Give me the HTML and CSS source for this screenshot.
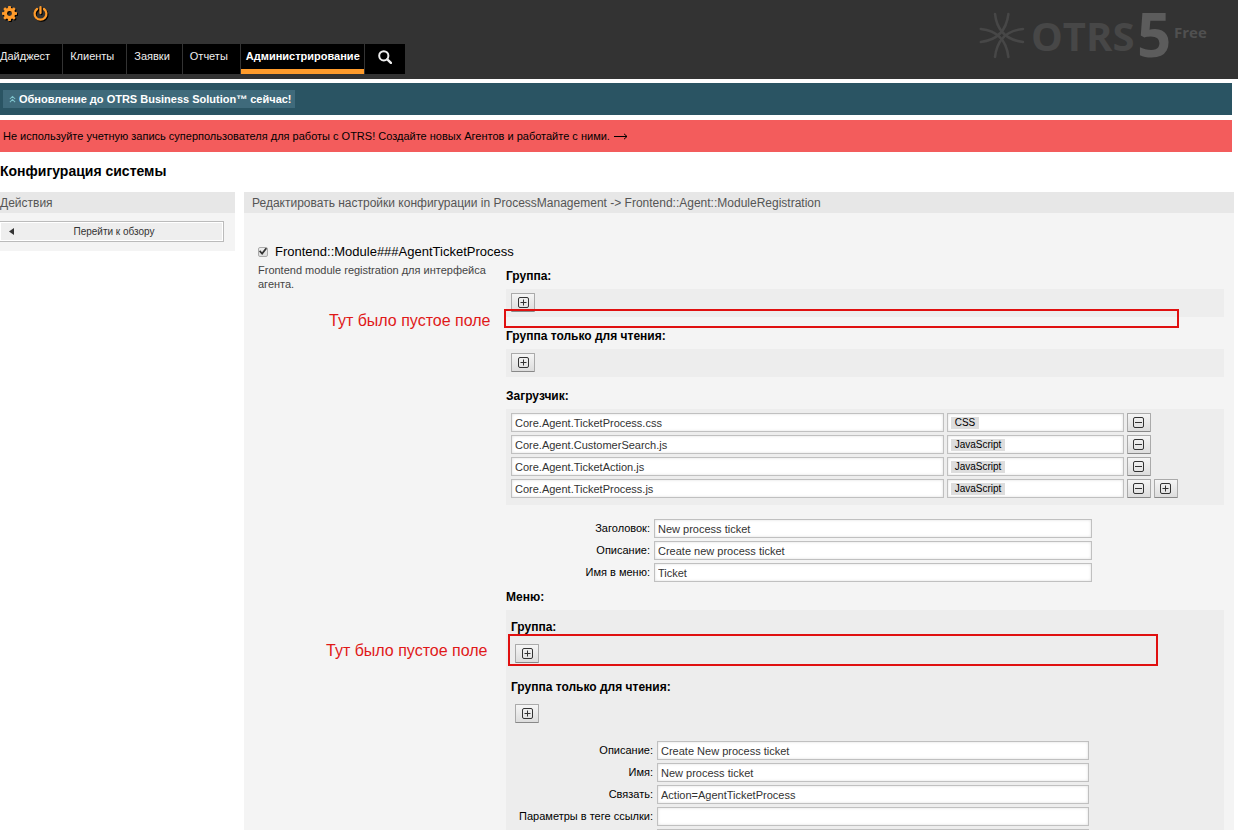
FILE: index.html
```html
<!DOCTYPE html>
<html lang="ru">
<head>
<meta charset="utf-8">
<title>Конфигурация системы - OTRS</title>
<link rel="stylesheet" href="styles.css">
</head>
<body>
<svg class="defs" aria-hidden="true">
  <symbol id="plus" viewBox="0 0 11 11"><rect x=".5" y=".5" width="10" height="10" rx="1.5" fill="none" stroke="currentColor"/><path d="M2.5 5.5h6M5.5 2.5v6" stroke="currentColor" fill="none"/></symbol>
  <symbol id="minus" viewBox="0 0 11 11"><rect x=".5" y=".5" width="10" height="10" rx="1.5" fill="none" stroke="currentColor"/><path d="M2 5.5h7" stroke="currentColor" fill="none"/></symbol>
</svg>
<header class="header">
  <div class="toolbar">
    <a href="#" aria-label="Настройки"><svg class="tool-icon" viewBox="0 0 16 16"><path fill="currentColor" fill-rule="evenodd" d="M6.7 0h2.6l.4 2.2 1.2.5 1.9-1.3 1.8 1.8-1.3 1.9.5 1.2 2.2.4v2.6l-2.2.4-.5 1.2 1.3 1.9-1.8 1.8-1.9-1.3-1.2.5-.4 2.2H6.700l-.4-2.200-1.200-.5-1.900 1.300-1.800-1.800 1.300-1.900-.5-1.200L0 9.300V6.700l2.200-.4.5-1.200-1.300-1.900 1.800-1.800 1.900 1.300 1.200-.5zM8 5.400a2.600 2.600 0 1 0 0 5.200 2.600 2.600 0 0 0 0-5.200z"/></svg></a>
    <a href="#" aria-label="Выход"><svg class="tool-icon" viewBox="0 0 16 16"><path fill="none" stroke="currentColor" stroke-width="2.400" stroke-linecap="round" d="M4.300 3.200a6.300 6.300 0 1 0 7.400 0M8 1.200v6.300"/></svg></a>
  </div>
  <nav class="nav">
    <a href="#">Дайджест</a>
    <a href="#">Клиенты</a>
    <a href="#">Заявки</a>
    <a href="#">Отчеты</a>
    <a href="#" class="selected">Администрирование</a>
    <a href="#" class="search" aria-label="Поиск"><svg viewBox="0 0 14 14"><circle cx="5.800" cy="5.800" r="4.600" fill="none" stroke="currentColor" stroke-width="2"/><path d="M9.300 9.300l3.600 3.600" stroke="currentColor" stroke-width="2.400" stroke-linecap="round"/></svg></a>
  </nav>
  <svg class="logo" viewBox="0 0 232 56" role="img" aria-label="OTRS 5 Free">
    <g fill="none" stroke="#474747" stroke-width="2.500" stroke-linecap="round">
      <path d="M15 6Q18 31 43 34"/>
      <path d="M28.400 6Q25.400 31 .8 34"/>
      <path d="M15 49Q18 23.600 43 21"/>
      <path d="M28.400 49Q25.400 23.600 .8 21"/>
    </g>
    <text class="logo-name" x="51" y="43">OTRS</text>
    <text class="logo-version" x="157" y="49">5</text>
    <text class="logo-edition" x="194" y="30">Free</text>
  </svg>
</header>
<section class="notice upgrade"><a href="#"><svg viewBox="0 0 8 8"><path d="M1 4l3-3 3 3M1 7.500l3-3 3 3" fill="none" stroke="currentColor" stroke-width="1.200"/></svg>Обновление до OTRS Business Solution™ сейчас!</a></section>
<section class="notice warning"><a href="#">Не используйте учетную запись суперпользователя для работы с OTRS! Создайте новых Агентов и работайте с ними.<svg viewBox="0 0 14 7"><path d="M0 3.500h13M10 .8l3 2.700-3 2.700" fill="none" stroke="currentColor"/></svg></a></section>
<h1>Конфигурация системы</h1>
<div class="columns">
  <aside class="sidebar">
    <h2>Действия</h2>
    <div class="actions"><button type="button" class="wide-button"><svg viewBox="0 0 5 7"><path d="M5 0v7L0 3.500z" fill="currentColor"/></svg><span>Перейти к обзору</span></button></div>
  </aside>
  <main class="content">
    <h2>Редактировать настройки конфигурации in ProcessManagement -&gt; Frontend::Agent::ModuleRegistration</h2>
    <form class="setting">
      <div class="setting-name"><input type="checkbox" id="enabled" checked><label for="enabled">Frontend::Module###AgentTicketProcess</label></div>
      <div class="setting-body">
        <p class="description">Frontend module registration для интерфейса агента.</p>
        <div class="values">
          <h3>Группа:</h3>
          <div class="panel"><button type="button" class="small-button" aria-label="Добавить"><svg><use href="#plus"/></svg></button></div>
          <h3>Группа только для чтения:</h3>
          <div class="panel"><button type="button" class="small-button" aria-label="Добавить"><svg><use href="#plus"/></svg></button></div>
          <h3>Загрузчик:</h3>
          <div class="panel loader">
            <div class="loader-row"><input type="text" aria-label="Файл" value="Core.Agent.TicketProcess.css"><button type="button" class="picker" aria-haspopup="listbox"><span>CSS</span></button><button type="button" class="small-button" aria-label="Удалить"><svg><use href="#minus"/></svg></button></div>
            <div class="loader-row"><input type="text" aria-label="Файл" value="Core.Agent.CustomerSearch.js"><button type="button" class="picker" aria-haspopup="listbox"><span>JavaScript</span></button><button type="button" class="small-button" aria-label="Удалить"><svg><use href="#minus"/></svg></button></div>
            <div class="loader-row"><input type="text" aria-label="Файл" value="Core.Agent.TicketAction.js"><button type="button" class="picker" aria-haspopup="listbox"><span>JavaScript</span></button><button type="button" class="small-button" aria-label="Удалить"><svg><use href="#minus"/></svg></button></div>
            <div class="loader-row"><input type="text" aria-label="Файл" value="Core.Agent.TicketProcess.js"><button type="button" class="picker" aria-haspopup="listbox"><span>JavaScript</span></button><button type="button" class="small-button" aria-label="Удалить"><svg><use href="#minus"/></svg></button><button type="button" class="small-button" aria-label="Добавить"><svg><use href="#plus"/></svg></button></div>
          </div>
          <div class="fields">
            <label for="title">Заголовок:</label><input type="text" id="title" value="New process ticket">
            <label for="desc">Описание:</label><input type="text" id="desc" value="Create new process ticket">
            <label for="navname">Имя в меню:</label><input type="text" id="navname" value="Ticket">
          </div>
          <h3 class="menu-title">Меню:</h3>
          <div class="panel menu">
            <h3>Группа:</h3>
            <div class="panel"><button type="button" class="small-button" aria-label="Добавить"><svg><use href="#plus"/></svg></button></div>
            <h3>Группа только для чтения:</h3>
            <div class="panel"><button type="button" class="small-button" aria-label="Добавить"><svg><use href="#plus"/></svg></button></div>
            <div class="fields">
              <label for="mdesc">Описание:</label><input type="text" id="mdesc" value="Create New process ticket">
              <label for="mname">Имя:</label><input type="text" id="mname" value="New process ticket">
              <label for="mlink">Связать:</label><input type="text" id="mlink" value="Action=AgentTicketProcess">
              <label for="mopt">Параметры в теге ссылки:</label><input type="text" id="mopt">
              <span></span><input type="text" aria-label="Имя в меню">
            </div>
          </div>
        </div>
      </div>
    </form>
  </main>
</div>
<div class="mark mark-first"></div>
<div class="mark mark-second"></div>
<p class="remark remark-first">Тут было пустое поле</p>
<p class="remark remark-second">Тут было пустое поле</p>
</body>
</html>
```

FILE: styles.css
```css
* { box-sizing: border-box; }
body {
  position: relative;
  height: 100vh;
  margin: 0;
  overflow: hidden;
  background: #fff;
  color: #000;
  font: 11px/16px "Liberation Sans", Arial, sans-serif;
}
a { color: inherit; text-decoration: none; }
button, input { font: inherit; color: #333; margin: 0; }
h1, h2, h3, p { margin: 0; }
svg { display: block; }
.defs { position: absolute; width: 0; height: 0; }

.header {
  position: relative;
  display: flex;
  flex-direction: column;
  justify-content: space-between;
  height: 79px;
  padding: 6px 0 5px;
  background: #333;
}
.toolbar { display: flex; gap: 16px; padding-left: 2px; color: #ff9b2b; }
.tool-icon { width: 15px; height: 15px; filter: drop-shadow(1px 1px 0 #000); }
.nav { display: flex; gap: 1px; }
.nav a {
  height: 30px;
  padding: 4px 12px 0 7px;
  background: #000;
  color: #eee;
}
.nav a:first-child { padding-left: 0; }
.nav .selected { padding: 4px 4px 0 5px; border-bottom: 5px solid #ff9b2b; color: #fff; font-weight: bold; }
.nav .search { padding: 6px 13px 0; }
.nav .search svg { width: 14px; height: 14px; }
.logo { position: absolute; top: 8px; right: 26px; width: 232px; height: 56px; overflow: visible; }
.logo text { font-family: "Open Sans", sans-serif; font-weight: 700; }
.logo-name { font-size: 40px; fill: #474747; }
.logo-version { font-size: 60px; fill: #5c5c5c; }
.logo-edition { font-size: 15px; fill: #505050; }

.notice { height: 32px; margin: 4px 6px 5px 0; padding: 7px 3px; }
.notice a { display: inline-flex; align-items: center; }
.upgrade { background: #2a5463; color: #fff; font-weight: bold; }
.upgrade a { height: 18px; padding: 0 3px 0 6px; gap: 3px; background: #3f6a7b; }
.upgrade svg { width: 7px; height: 8px; color: #7fc3cc; }
.warning { margin-top: 0; padding-top: 8px; background: #f35c5c; }
.warning a { gap: 4px; }
.warning svg { width: 14px; height: 7px; }

h1 { margin: 11px 0 13px; font-size: 14px; line-height: 16px; }
.columns { display: flex; align-items: flex-start; gap: 9px; padding-right: 4px; }
h2 {
  height: 21px;
  background: #e7e7e7;
  color: #555;
  font-size: 12px;
  font-weight: normal;
  line-height: 22px;
}
.sidebar { flex: 0 0 235px; background: #f4f4f4; }
.actions { padding: 8px 11px 9px 0; }
.wide-button {
  display: flex;
  align-items: center;
  width: 100%;
  height: 21px;
  padding: 0 9px;
  border: 1px solid #bbb;
  border-left: 0;
  background: #eee;
  box-shadow: inset 0 0 0 1px #fff;
  font-size: 10px;
}
.wide-button svg { width: 5px; height: 7px; }
.wide-button span { flex: 1; }
.content { flex: 1; min-height: 638px; background: #f4f4f4; }
.content h2 { padding-left: 8px; }
.setting { padding: 29px 10px 0 14px; }
.setting-name { display: flex; align-items: center; gap: 7px; height: 19px; font-size: 13px; }
input[type="checkbox"] {
  appearance: none;
  display: grid;
  place-items: center;
  width: 10px;
  height: 10px;
  border: 1px solid #aaa;
  border-radius: 2px;
  background: linear-gradient(#eee, #ddd);
}
input[type="checkbox"]:checked::before {
  content: "";
  width: 8px;
  height: 8px;
  background: #333;
  clip-path: polygon(0 50%, 15% 35%, 38% 60%, 85% 0, 100% 15%, 40% 95%);
}
.setting-body { display: flex; }
.description { flex: 0 0 248px; padding: 2px 20px 0 0; color: #444; line-height: 14px; }
.values { flex: 1; padding-top: 7px; }
h3 { height: 16px; margin: 11px 0 5px; font-size: 12px; line-height: 16px; }
.values > h3:first-child { margin-top: 0; }
.panel { min-height: 28px; padding: 4px 5px; background: #ededed; }
.small-button {
  display: grid;
  place-items: center;
  width: 24px;
  height: 19px;
  padding: 0;
  border: 1px solid #aaa;
  border-bottom-color: #888;
  border-radius: 1px;
  background: linear-gradient(#f5f5f5, #ddd);
}
.small-button svg { width: 11px; height: 11px; }
input[type="text"], .picker {
  min-width: 0;
  height: 19px;
  padding: 0 3px;
  border: 1px solid #c0c0c0;
  border-radius: 0;
  background: #fff;
  box-shadow: inset 0 0 3px #ddd;
}
.loader { display: grid; gap: 3px; padding-bottom: 7px; }
.loader-row { display: grid; grid-template-columns: 61fr 25fr 24px 24px; column-gap: 3px; margin-right: 41px; }
.picker { text-align: left; font-size: 10px; line-height: 12px; color: #000; }
.picker span { display: inline-block; padding: 0 4px; background: #ddd; }
.fields {
  display: grid;
  grid-template-columns: 144px 61%;
  grid-auto-rows: 19px;
  gap: 3px 4px;
  padding-top: 14px;
}
.fields label { text-align: right; line-height: 18px; }
.values > .menu-title { margin-top: 7px; }
.menu { padding-top: 9px; }
.menu h3 { margin-top: 0; }
.menu .panel { margin-bottom: 11px; padding-left: 4px; }
.menu .fields { grid-template-columns: 142px 61%; padding-top: 2px; }

.mark { position: absolute; border: 2px solid #e01010; }
.mark-first { top: 309px; left: 504px; width: 675px; height: 19px; }
.mark-second { top: 634px; left: 508px; width: 650px; height: 32px; }
.remark { position: absolute; color: #e01818; font-size: 16px; line-height: 20px; white-space: nowrap; }
.remark-first { top: 311px; left: 329px; }
.remark-second { top: 641px; left: 326px; }
```
